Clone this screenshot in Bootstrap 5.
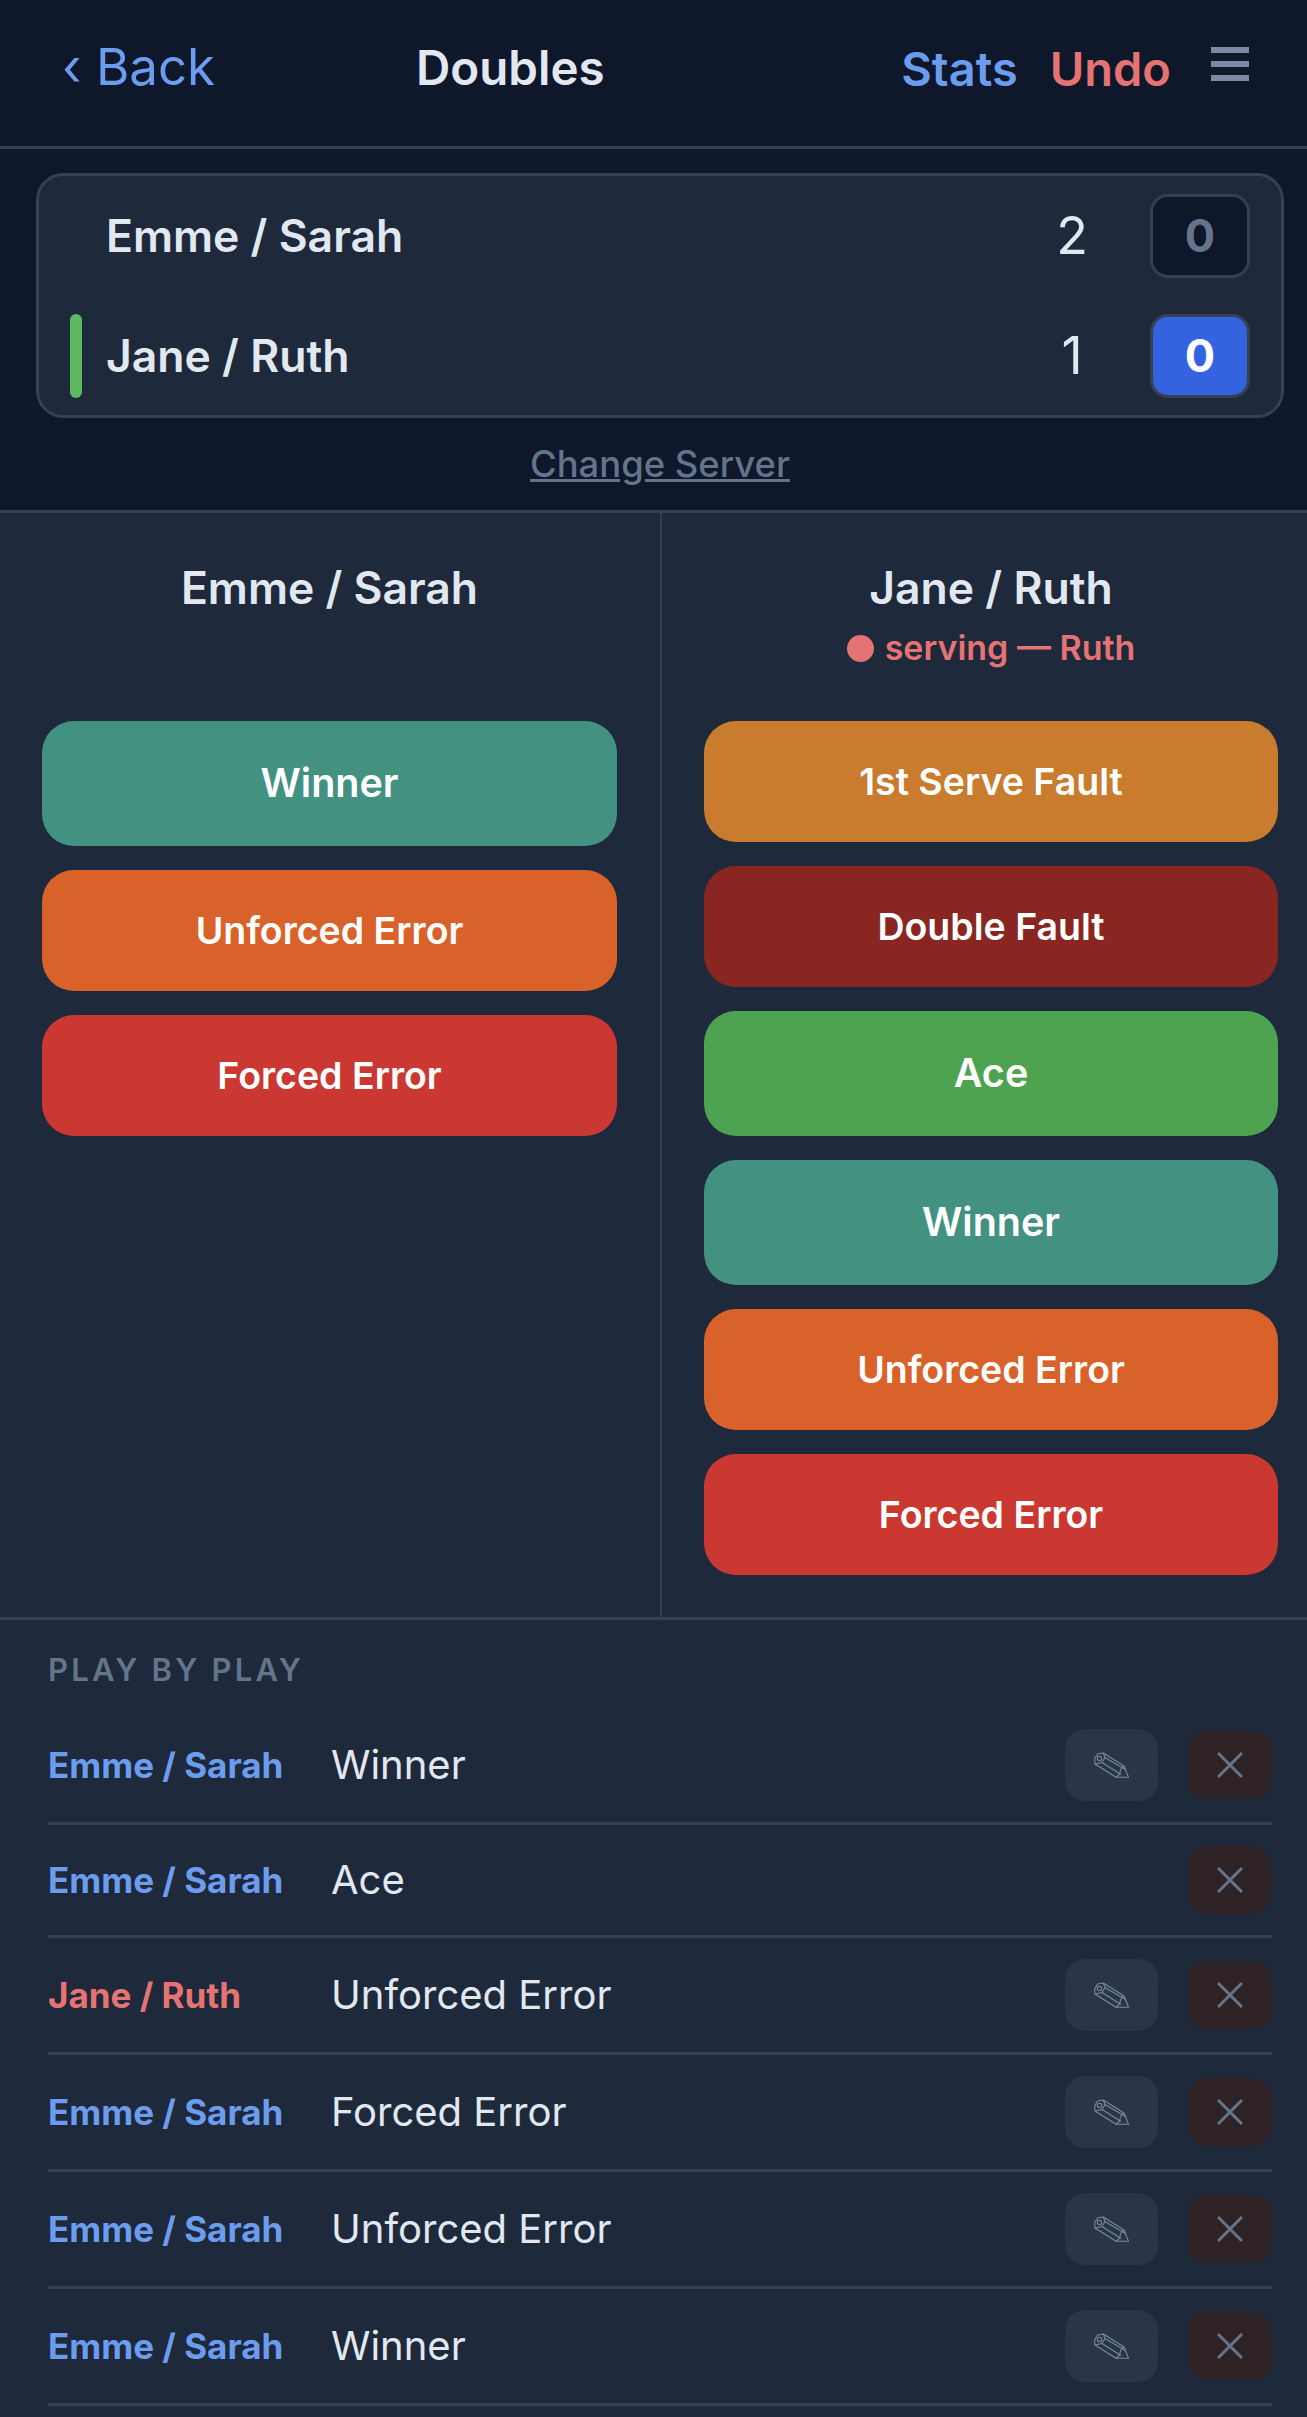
<!doctype html>
<html lang="en">
<head>
<meta charset="utf-8">
<title>Doubles</title>
<link href="https://cdn.jsdelivr.net/npm/bootstrap@5.3.0/dist/css/bootstrap.min.css" rel="stylesheet">
<style>
html, body { background: #1e293b; overflow: hidden; }
body { font-family: Inter, "Liberation Sans", sans-serif; color: #e2e8f0; }
.app-shell { width: 1320px; }
.top-area { background: #0f172a; }
.app-head { height: 149px; border-bottom: 3px solid #334155; padding: 0 71px 14px 62px; }
.back-link { width: 354px; font-size: 51px; color: #6b9cee; text-decoration: none; line-height: 1; }
.app-title { font-size: 47.500px; font-weight: 600; margin: 0; line-height: 1; padding-top: 4px; }
.head-link { font-size: 47px; font-weight: 600; text-decoration: none; line-height: 1; padding-top: 4px; }
.head-stats { color: #6b9cee; margin-right: 32px; }
.head-undo { color: #e57373; margin-right: 40px; }
.burger { width: 38px; height: 34px; margin-top: -4px; background: linear-gradient(#7c8aa3 0 6px, transparent 6px 14px, #7c8aa3 14px 20px, transparent 20px 28px, #7c8aa3 28px 34px); }
.score-box { margin: 24px 36px 0; background: #1e293b; border: 3px solid #334155; border-radius: 27px; padding: 18px 31px 17px; }
.score-row { height: 84px; }
.score-row + .score-row { margin-top: 36px; }
.srv-bar { width: 12px; height: 84px; border-radius: 6px; margin-right: 24px; background: #5dba60; }
.srv-none { background: transparent; }
.team-name { font-size: 44.500px; font-weight: 600; line-height: 1; }
.set-num { width: 60px; text-align: center; font-size: 52px; line-height: 1; margin-right: 48px; }
.game-num { width: 100px; height: 84px; border-radius: 18px; border: 3px solid #334155; font-size: 45px; font-weight: 700; }
.game-off { background: #0f172a; color: #64748b; }
.game-on { background: #3563e0; color: #fff; }
.srv-change { height: 92px; }
.srv-change a { font-size: 36.400px; font-weight: 500; color: #64748b; }
.panels { border-top: 3px solid #334155; border-bottom: 3px solid #334155; }
.side { flex: 1 1 50%; padding: 0 42px 42px; }
.side:first-child { padding-right: 43px; }
.side + .side { border-left: 2px solid #334155; }
.side-head { height: 208px; padding-top: 51px; }
.side-name { font-size: 44.500px; font-weight: 600; line-height: 48px; margin: 0; }
.srv-note { font-size: 34px; font-weight: 600; color: #e57373; line-height: 40px; margin-top: 16px; }
.srv-dot { width: 27px; height: 27px; border-radius: 50%; background: #e57373; margin-right: 11px; }
.act { display: block; width: 100%; padding: 39px 0; border: 0; border-radius: 32px; color: #fff; font-size: 37.500px; font-weight: 600; line-height: 43px; }
.act-lg { font-size: 39.500px; line-height: 47px; }
.act + .act { margin-top: 24px; }
.c-teal, .c-teal:hover { background: #439181; color: #fff; }
.c-orange, .c-orange:hover { background: #d9622b; color: #fff; }
.c-red, .c-red:hover { background: #cb3832; color: #fff; }
.c-amber, .c-amber:hover { background: #c97c2e; color: #fff; }
.c-maroon, .c-maroon:hover { background: #8a2621; color: #fff; }
.c-green, .c-green:hover { background: #4ea351; color: #fff; }
.plays { padding: 30px 48px 0; }
.plays-head { font-size: 31px; font-weight: 600; letter-spacing: 3.200px; color: #64748b; line-height: 40px; margin-bottom: 18px; }
.play-row { border-bottom: 3px solid #334155; padding: 21px 0; }
.play-team { width: 283px; font-size: 35px; font-weight: 700; flex: none; }
.team-a { color: #6b9cee; }
.team-b { color: #e57373; }
.play-evt { font-size: 40px; color: #e2e8f0; }
.tool-btn { display: flex; align-items: center; justify-content: center; padding: 0; border: 0; }
.tool-edit { width: 93px; height: 72px; border-radius: 20px; background: #2a3547; margin-right: 30px; }
.tool-del { width: 84px; height: 68px; border-radius: 20px; background: #2e2224; }
.tool-edit:hover { background: #2a3547; }
.tool-del:hover { background: #2e2224; }
</style>
</head>
<body>
<div class="app-shell">
  <div class="top-area">
    <header class="app-head d-flex align-items-center">
      <a class="back-link" href="#">‹ Back</a>
      <h1 class="app-title">Doubles</h1>
      <div class="ms-auto d-flex align-items-center">
        <a class="head-link head-stats" href="#">Stats</a>
        <a class="head-link head-undo" href="#">Undo</a>
        <div class="burger"></div>
      </div>
    </header>
    <div class="score-box">
      <div class="score-row d-flex align-items-center">
        <span class="srv-bar srv-none"></span>
        <span class="team-name flex-grow-1">Emme / Sarah</span>
        <span class="set-num">2</span>
        <span class="game-num game-off d-flex align-items-center justify-content-center">0</span>
      </div>
      <div class="score-row d-flex align-items-center">
        <span class="srv-bar"></span>
        <span class="team-name flex-grow-1">Jane / Ruth</span>
        <span class="set-num">1</span>
        <span class="game-num game-on d-flex align-items-center justify-content-center">0</span>
      </div>
    </div>
    <div class="srv-change d-flex align-items-center justify-content-center"><a href="#">Change Server</a></div>
  </div>
  <div class="panels d-flex">
    <section class="side">
      <div class="side-head text-center"><h2 class="side-name">Emme / Sarah</h2></div>
      <button class="btn act act-lg c-teal">Winner</button>
      <button class="btn act c-orange">Unforced Error</button>
      <button class="btn act c-red">Forced Error</button>
    </section>
    <section class="side">
      <div class="side-head text-center">
        <h2 class="side-name">Jane / Ruth</h2>
        <div class="srv-note d-flex align-items-center justify-content-center"><span class="srv-dot"></span>serving — Ruth</div>
      </div>
      <button class="btn act c-amber">1st Serve Fault</button>
      <button class="btn act c-maroon">Double Fault</button>
      <button class="btn act act-lg c-green">Ace</button>
      <button class="btn act act-lg c-teal">Winner</button>
      <button class="btn act c-orange">Unforced Error</button>
      <button class="btn act c-red">Forced Error</button>
    </section>
  </div>
  <div class="plays">
    <div class="plays-head">PLAY BY PLAY</div>
    <svg width="0" height="0" class="d-block">
      <symbol id="ico-pen" viewBox="0 0 35 26"><g fill="none" stroke="#7c8aa3" stroke-width="1.1" stroke-linejoin="round"><path d="M9.300 1 30 14 34.500 25.300 22 25.300 1 12 .6 7 3.500 2Z"/><path d="M9.300 1 11 5.500 8 10.500 1 12M11 5.500 31.500 17.500M8 10.500 27 22.500M30 14C27.500 15 25.500 19 26 21.500L22 25.300"/><circle cx="5.500" cy="6.500" r="2.200"/></g></symbol>
      <symbol id="ico-x" viewBox="0 0 26 26"><path d="M1 1 25 25M25 1 1 25" fill="none" stroke="#64748b" stroke-width="3"/></symbol>
    </svg>
    <div class="play-row d-flex align-items-center"><span class="play-team team-a">Emme / Sarah</span><span class="play-evt flex-grow-1">Winner</span><button class="btn tool-btn tool-edit"><svg width="35" height="26"><use href="#ico-pen"/></svg></button><button class="btn tool-btn tool-del"><svg width="26" height="26"><use href="#ico-x"/></svg></button></div>
    <div class="play-row d-flex align-items-center"><span class="play-team team-a">Emme / Sarah</span><span class="play-evt flex-grow-1">Ace</span><button class="btn tool-btn tool-del"><svg width="26" height="26"><use href="#ico-x"/></svg></button></div>
    <div class="play-row d-flex align-items-center"><span class="play-team team-b">Jane / Ruth</span><span class="play-evt flex-grow-1">Unforced Error</span><button class="btn tool-btn tool-edit"><svg width="35" height="26"><use href="#ico-pen"/></svg></button><button class="btn tool-btn tool-del"><svg width="26" height="26"><use href="#ico-x"/></svg></button></div>
    <div class="play-row d-flex align-items-center"><span class="play-team team-a">Emme / Sarah</span><span class="play-evt flex-grow-1">Forced Error</span><button class="btn tool-btn tool-edit"><svg width="35" height="26"><use href="#ico-pen"/></svg></button><button class="btn tool-btn tool-del"><svg width="26" height="26"><use href="#ico-x"/></svg></button></div>
    <div class="play-row d-flex align-items-center"><span class="play-team team-a">Emme / Sarah</span><span class="play-evt flex-grow-1">Unforced Error</span><button class="btn tool-btn tool-edit"><svg width="35" height="26"><use href="#ico-pen"/></svg></button><button class="btn tool-btn tool-del"><svg width="26" height="26"><use href="#ico-x"/></svg></button></div>
    <div class="play-row d-flex align-items-center"><span class="play-team team-a">Emme / Sarah</span><span class="play-evt flex-grow-1">Winner</span><button class="btn tool-btn tool-edit"><svg width="35" height="26"><use href="#ico-pen"/></svg></button><button class="btn tool-btn tool-del"><svg width="26" height="26"><use href="#ico-x"/></svg></button></div>
  </div>
</div>
<script src="https://cdn.jsdelivr.net/npm/bootstrap@5.3.0/dist/js/bootstrap.bundle.min.js"></script>
</body>
</html>
